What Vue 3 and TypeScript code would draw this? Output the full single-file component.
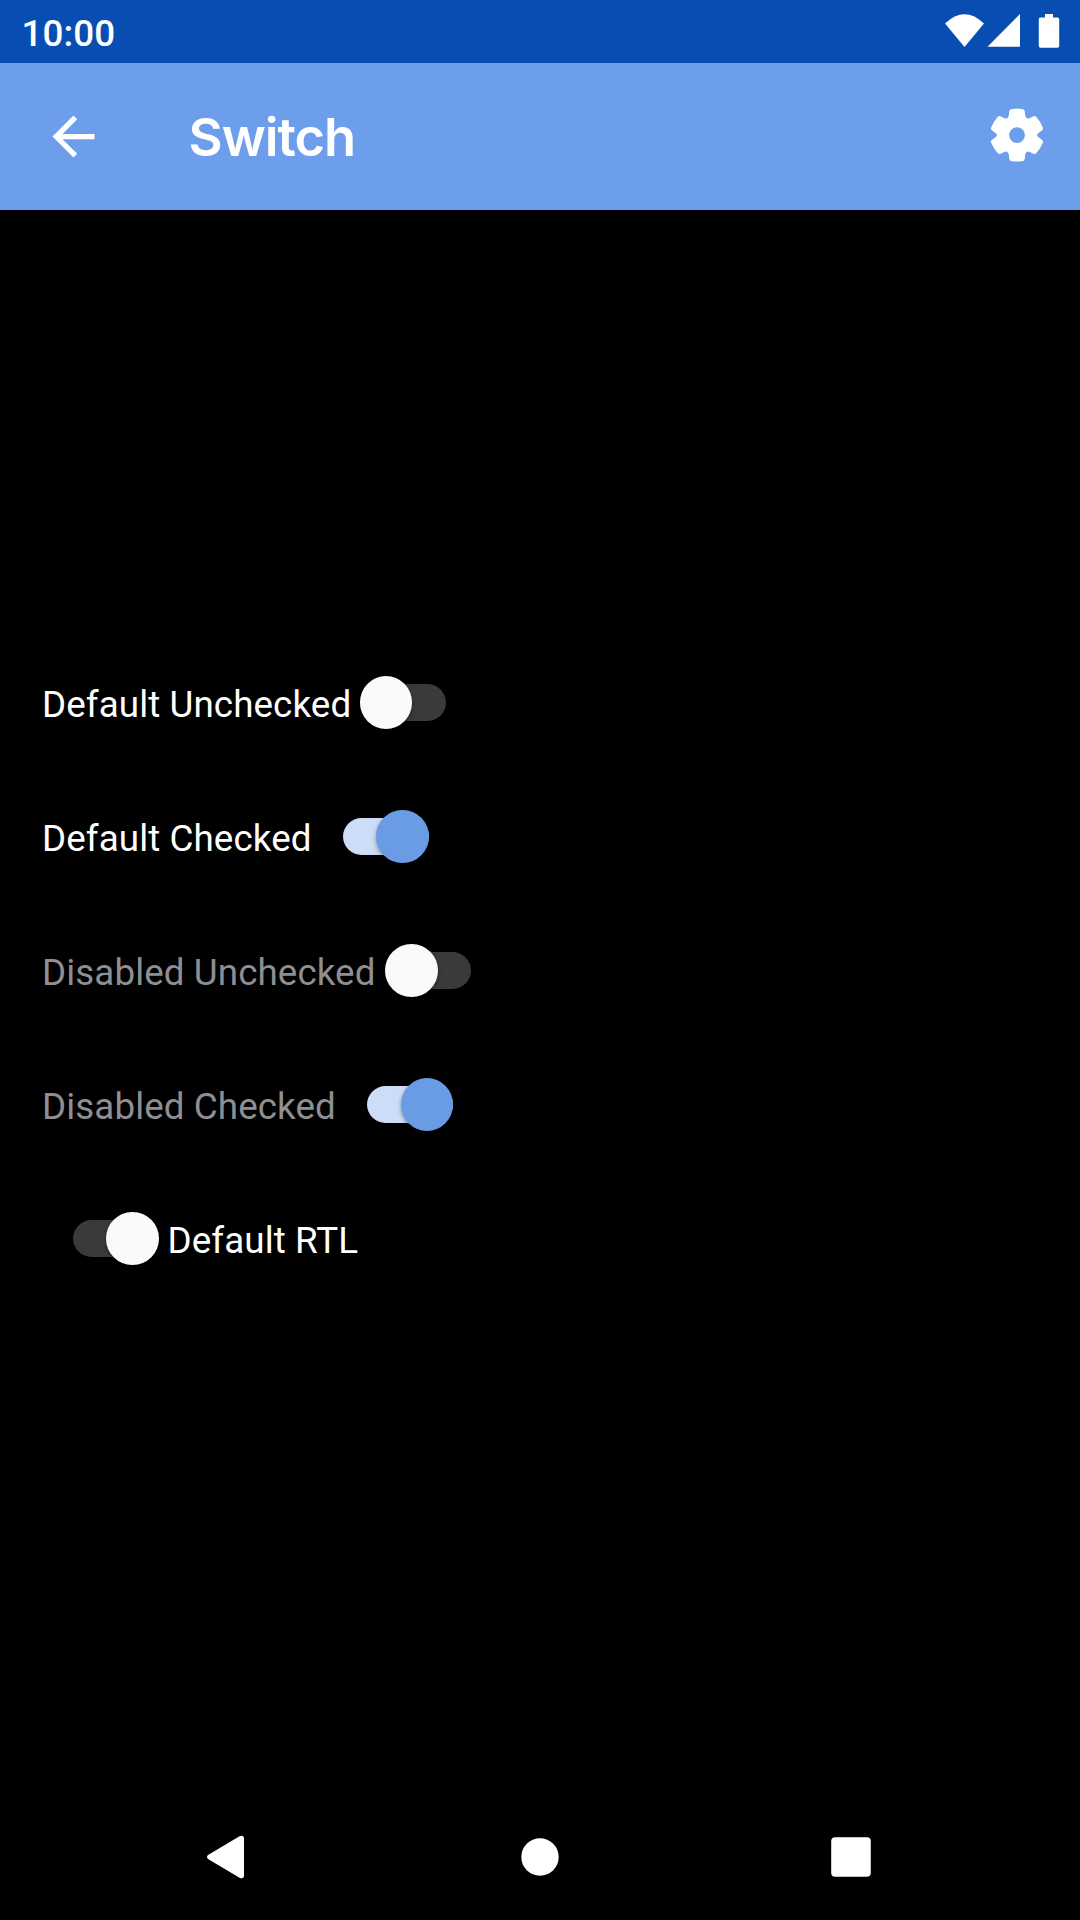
<script setup lang="ts">
interface SwitchItem {
  label: string
  checked?: boolean
  disabled?: boolean
  rtl?: boolean
}

const items: SwitchItem[] = [
  { label: 'Default Unchecked' },
  { label: 'Default Checked', checked: true },
  { label: 'Disabled Unchecked', disabled: true },
  { label: 'Disabled Checked', checked: true, disabled: true },
  { label: 'Default RTL', rtl: true },
]
</script>

<template>
  <div class="screen">
    <div class="status-bar">
      <span class="clock">10:00</span>
      <svg class="status-icons" width="120" height="40" viewBox="0 0 120 40" fill="#fff">
        <path d="M5 13.500Q24.500 -5 44 13.500L24.500 37Z" />
        <path d="M47.500 36.700L80 4V36.700Z" />
        <path d="M105 4h8v3.400h4.500a1.700 1.700 0 0 1 1.700 1.700V36a1.700 1.700 0 0 1-1.700 1.700h-17a1.700 1.700 0 0 1-1.700-1.700V9.100a1.700 1.700 0 0 1 1.700-1.700H105z" />
      </svg>
    </div>
    <header class="app-bar">
      <svg class="back" width="63" height="63" viewBox="0 0 24 24" fill="#fff">
        <path d="M20 11H7.830l5.590-5.590L12 4l-8 8 8 8 1.410-1.410L7.830 13H20v-2z" />
      </svg>
      <h1 class="title">Switch</h1>
      <svg class="gear" width="54" height="54" viewBox="0 0 54 54">
        <path
          fill="#fff"
          fill-rule="evenodd"
          d="M21 .9Q27-.4 33 .9Q34.500 1.200 34.700 3L35.200 7.500Q36 10.900 39 10.100L43.500 8Q45.200 7.400 46.400 8.800Q50.600 13.500 52.900 19.400Q53.500 20.900 52.200 21.900L48.200 24.900Q46 26.800 48.200 28.700L52.200 31.800Q53.500 32.800 52.900 34.200Q50.600 40.100 46.400 44.800Q45.200 46.100 43.500 45.500L39 43.400Q36 42.600 35.200 46L34.700 50.700Q34.500 52.400 33 52.700Q27 53.900 21 52.700Q19.500 52.400 19.300 50.700L18.800 46Q18 42.600 15 43.400L10.500 45.500Q8.800 46.100 7.600 44.800Q3.400 40.100 1.100 34.200Q.5 32.800 1.800 31.800L5.800 28.700Q8 26.800 5.800 24.900L1.800 21.900Q.5 20.900 1.100 19.400Q3.400 13.500 7.600 8.800Q8.800 7.400 10.500 8L15 10.100Q18 10.900 18.800 7.500L19.300 3Q19.500 1.200 21 .9ZM27 18.900a7.900 7.900 0 1 0 0 15.800a7.900 7.900 0 0 0 0-15.800Z"
        />
      </svg>
    </header>
    <main class="content">
      <div
        v-for="item in items"
        :key="item.label"
        class="row"
        :class="{ disabled: item.disabled, checked: item.checked, rtl: item.rtl }"
      >
        <span class="label">{{ item.label }}</span>
        <span class="switch"><span class="thumb" /></span>
      </div>
    </main>
    <nav class="nav-bar">
      <svg width="60" height="60" viewBox="0 0 60 60" fill="#fff">
        <path d="M13 28L44.500 9.200Q48.500 7.500 49 11V49Q48.500 52.500 44.500 50.800L13 32Q11 30 13 28Z" />
      </svg>
      <svg width="60" height="60" viewBox="0 0 60 60" fill="#fff">
        <circle cx="30" cy="30" r="18.700" />
      </svg>
      <svg width="60" height="60" viewBox="0 0 60 60" fill="#fff">
        <rect x="10.200" y="10.200" width="39.600" height="39.600" rx="4" />
      </svg>
    </nav>
  </div>
</template>

<style>
body {
  background: #000;
}
</style>

<style scoped>
.screen {
  width: 1080px;
  height: 1920px;
  display: flex;
  flex-direction: column;
  background: #000;
  color: #fff;
  font-family: Roboto, sans-serif;
  overflow: hidden;
}
.status-bar {
  height: 63px;
  flex: none;
  display: flex;
  justify-content: space-between;
  background: #084db2;
  padding: 0 20px 0 21.500px;
}
.clock {
  font-size: 36.750px;
  font-weight: 500;
  line-height: 68px;
  letter-spacing: 0.1px;
}
.status-icons {
  margin-top: 10px;
}
.app-bar {
  height: 147px;
  flex: none;
  display: flex;
  align-items: flex-start;
  background: #6d9eeb;
  padding: 0 36.500px 0 42px;
}
.back {
  margin-top: 42px;
}
.title {
  flex: 1;
  margin: 0 0 0 83.500px;
  font-family: Inter, sans-serif;
  font-size: 52.500px;
  font-weight: 600;
  line-height: 149px;
  letter-spacing: -1px;
}
.gear {
  margin-top: 45.500px;
  transform: translateY(-0.700px);
}
.content {
  flex: 1;
  padding: 426px 42px 0;
}
.row {
  height: 134px;
  display: flex;
  align-items: flex-start;
  white-space: nowrap;
}
.label {
  font-size: 36.750px;
  line-height: 44px;
  margin-top: 47px;
  letter-spacing: 0.1px;
}
.disabled .label {
  color: #8e8e93;
}
.switch {
  position: relative;
  display: flex;
  width: 86px;
  height: 53px;
  margin: 40px 0 0 8.500px;
}
.switch::before {
  content: '';
  position: absolute;
  inset: 8px 0;
  border-radius: 19px;
  background: #3a3a3c;
}
.thumb {
  position: relative;
  width: 52.500px;
  height: 53px;
  border-radius: 50%;
  background: #fafafa;
  box-shadow: 0 2px 4px rgba(0, 0, 0, 0.35);
}
.checked .switch {
  margin-left: 31px;
  justify-content: flex-end;
}
.checked .switch::before {
  background: #cdddf7;
}
.checked .thumb {
  background: #6a9ce6;
}
.disabled .switch {
  margin-left: 9.500px;
}
.disabled.checked .switch {
  margin-left: 31.500px;
}
.rtl {
  flex-direction: row-reverse;
  justify-content: flex-end;
  padding-left: 30.500px;
}
.rtl .switch {
  justify-content: flex-end;
  margin: 40px 9px 0 0;
}
.nav-bar {
  height: 126px;
  flex: none;
  display: flex;
  align-items: center;
  justify-content: space-between;
  padding: 0 199px 0 195px;
}
.nav-bar svg:nth-child(2) {
  margin-left: 4px;
}
</style>
